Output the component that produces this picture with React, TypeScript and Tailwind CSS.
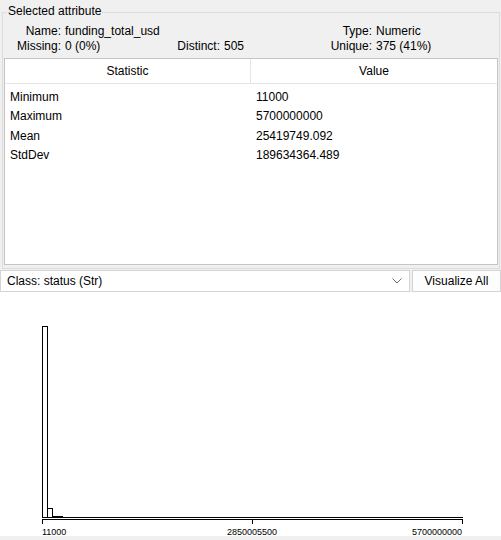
import React from 'react';

const stats = [
  { name: 'Minimum', value: '11000' },
  { name: 'Maximum', value: '5700000000' },
  { name: 'Mean', value: '25419749.092' },
  { name: 'StdDev', value: '189634364.489' },
];

function Histogram() {
  // bars drawn in panel coordinates (panel top = page y 292)
  return (
    <svg width="501" height="244" className="block" shapeRendering="crispEdges">
      <rect x="42.5" y="34.5" width="5" height="191" fill="white" stroke="black" />
      <rect x="47.5" y="216.5" width="5" height="9" fill="white" stroke="black" />
      <rect x="52.5" y="224.5" width="10" height="1" fill="white" stroke="black" />
      <line x1="42" y1="225.5" x2="463" y2="225.5" stroke="black" />
      <line x1="42" y1="227.5" x2="463" y2="227.5" stroke="black" />
      <line x1="42.5" y1="227" x2="42.5" y2="232" stroke="black" />
      <line x1="252.5" y1="227" x2="252.5" y2="232" stroke="black" />
      <line x1="462.5" y1="227" x2="462.5" y2="232" stroke="black" />
      <g fontFamily="'Liberation Sans', Arial, sans-serif" fontSize="9" fill="black">
        <text x="42" y="243">11000</text>
        <text x="252" y="243" textAnchor="middle">2850005500</text>
        <text x="462" y="243" textAnchor="end">5700000000</text>
      </g>
    </svg>
  );
}

export default function App() {
  return (
    <div className="w-[501px] h-[540px] overflow-hidden bg-[#f0f0f0] pt-[12px] font-['Liberation_Sans',Arial,sans-serif] text-[12px] text-black">
      {/* Selected attribute group */}
      <div className="relative ml-[2px] w-[498px] h-[257px] border border-[#dcdcdc] flex flex-col">
        <span className="absolute left-[4px] -top-[9px] bg-[#f0f0f0] px-[1px] leading-[15px]">Selected attribute</span>

        <div className="mt-[11px] grid grid-cols-[58px_107px_44px_78px_66px_1fr] gap-x-[4px] leading-[15px]">
          <span className="text-right">Name:</span>
          <span className="col-span-3">funding_total_usd</span>
          <span className="text-right">Type:</span>
          <span>Numeric</span>

          <span className="text-right">Missing:</span>
          <span>0 (0%)</span>
          <span className="text-right">Distinct:</span>
          <span>505</span>
          <span className="text-right">Unique:</span>
          <span>375 (41%)</span>
        </div>

        <div className="mt-[4px] ml-[1px] w-[494px] h-[207px] border border-[#c4c4c4] bg-white flex flex-col">
          <div className="flex h-[25px] border-b border-[#e5e5e5]">
            <div className="w-[246px] border-r border-[#e5e5e5] flex items-center justify-center">Statistic</div>
            <div className="flex-1 flex items-center justify-center">Value</div>
          </div>
          <div className="pt-[3px]">
            {stats.map(s => (
              <div key={s.name} className="flex h-[19.5px] items-center">
                <div className="w-[246px] pl-[5px]">{s.name}</div>
                <div className="flex-1 pl-[5px]">{s.value}</div>
              </div>
            ))}
          </div>
        </div>
      </div>

      {/* Class selector row */}
      <div className="mt-[1px] flex h-[22px] gap-[2px]">
        <div className="w-[410px] border border-[#d4d4d4] bg-white flex items-center pl-[6px] pr-[4px]">
          <span className="flex-1">Class: status (Str)</span>
          <svg width="10" height="6" viewBox="0 0 10 6" className="mr-[3px]">
            <polyline points="0.5,0.5 5,5 9.5,0.5" fill="none" stroke="#6e6e6e" strokeWidth="1" />
          </svg>
        </div>
        <div className="w-[89px] border border-[#d4d4d4] bg-[#fdfdfd] flex items-center justify-center">
          Visualize All
        </div>
      </div>

      {/* Histogram */}
      <div className="h-[244px] bg-white">
        <Histogram />
      </div>
    </div>
  );
}
